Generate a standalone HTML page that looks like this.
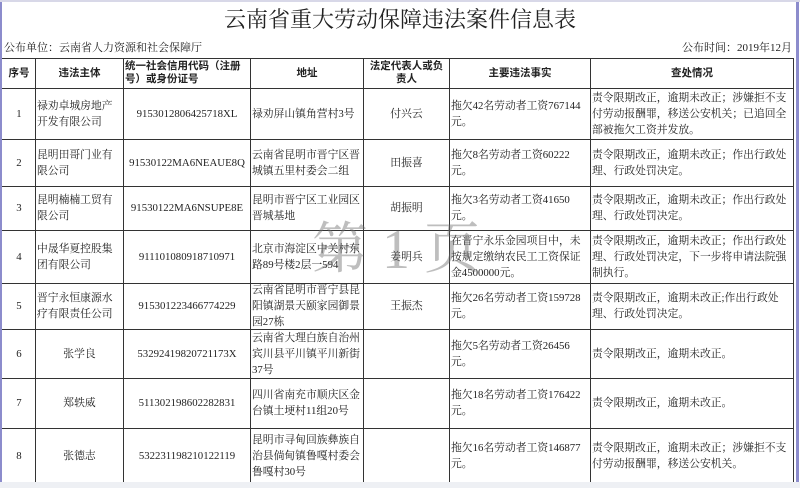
<!DOCTYPE html>
<html><head><meta charset="utf-8"><style>
body{margin:0;width:800px;height:488px;overflow:hidden;background:#fff;font-family:"Liberation Serif","Noto Serif CJK SC",serif;font-size:10.8px;color:#222;position:relative}
.v,.h{position:absolute;background:#333}
.v{width:1px}.h{height:1px}
.c{position:absolute;display:flex;align-items:center;line-height:16px;box-sizing:border-box;padding:0 1px 0 2px}
.ctr{justify-content:center;text-align:center}
.hd{font-family:"Liberation Sans","Noto Sans CJK SC",sans-serif;font-weight:bold;font-size:10.5px;line-height:13px}
</style></head><body>
<div style="position:absolute;left:0;top:0;width:2px;height:488px;background:#8c8ccc"></div>
<div style="position:absolute;left:796px;top:0;width:3px;height:488px;background:#8c8ccc"></div>
<div style="position:absolute;left:0;top:0;width:800px;height:2px;background:#d8d8e8"></div>
<div style="position:absolute;left:0;top:482px;width:800px;height:6px;background:#eef0f4"></div>
<div style="position:absolute;left:0;top:4px;width:800px;text-align:center;font-size:22px;line-height:32px;color:#222">云南省重大劳动保障违法案件信息表</div>
<div style="position:absolute;left:4px;top:40px;font-size:11px;line-height:16px">公布单位：云南省人力资源和社会保障厅</div>
<div style="position:absolute;right:8px;top:40px;font-size:11px;line-height:16px">公布时间：2019年12月</div>
<div class="h" style="left:2px;top:58px;width:792px"></div>
<div class="h" style="left:2px;top:88px;width:792px"></div>
<div class="h" style="left:2px;top:139px;width:792px"></div>
<div class="h" style="left:2px;top:186px;width:792px"></div>
<div class="h" style="left:2px;top:230px;width:792px"></div>
<div class="h" style="left:2px;top:283px;width:792px"></div>
<div class="h" style="left:2px;top:329px;width:792px"></div>
<div class="h" style="left:2px;top:378px;width:792px"></div>
<div class="h" style="left:2px;top:428px;width:792px"></div>
<div class="v" style="left:35px;top:58px;height:424px"></div>
<div class="v" style="left:123px;top:58px;height:424px"></div>
<div class="v" style="left:250px;top:58px;height:424px"></div>
<div class="v" style="left:363px;top:58px;height:424px"></div>
<div class="v" style="left:449px;top:58px;height:424px"></div>
<div class="v" style="left:590px;top:58px;height:424px"></div>
<div class="v" style="left:793px;top:58px;height:424px"></div>

<div class="c ctr hd" style="left:2px;top:58px;width:33px;height:30px">序号</div>
<div class="c ctr hd" style="left:35px;top:58px;width:88px;height:30px">违法主体</div>
<div class="c hd" style="left:123px;top:58px;width:127px;height:30px">统一社会信用代码（注册号）或身份证号</div>
<div class="c ctr hd" style="left:250px;top:58px;width:113px;height:30px">地址</div>
<div class="c ctr hd" style="left:363px;top:58px;width:86px;height:30px">法定代表人或负责人</div>
<div class="c ctr hd" style="left:449px;top:58px;width:141px;height:30px">主要违法事实</div>
<div class="c ctr hd" style="left:590px;top:58px;width:203px;height:30px">查处情况</div>

<div class="c ctr" style="left:2px;top:88px;width:33px;height:51px">1</div>
<div class="c" style="left:35px;top:88px;width:88px;height:51px">禄劝卓城房地产开发有限公司</div>
<div class="c ctr" style="left:123px;top:88px;width:127px;height:51px">91530128064257​18XL</div>
<div class="c" style="left:250px;top:88px;width:113px;height:51px">禄劝屏山镇角营村3号</div>
<div class="c ctr" style="left:363px;top:88px;width:86px;height:51px">付兴云</div>
<div class="c" style="left:449px;top:88px;width:141px;height:51px">拖欠42名劳动者工资767144元。</div>
<div class="c" style="left:590px;top:88px;width:203px;height:51px">责令限期改正，逾期未改正；涉嫌拒不支付劳动报酬罪，移送公安机关；已追回全部被拖欠工资并发放。</div>

<div class="c ctr" style="left:2px;top:139px;width:33px;height:47px">2</div>
<div class="c" style="left:35px;top:139px;width:88px;height:47px">昆明田哥门业有限公司</div>
<div class="c ctr" style="left:123px;top:139px;width:127px;height:47px">91530122MA6NEAUE8Q</div>
<div class="c" style="left:250px;top:139px;width:113px;height:47px">云南省昆明市晋宁区晋城镇五里村委会二组</div>
<div class="c ctr" style="left:363px;top:139px;width:86px;height:47px">田振喜</div>
<div class="c" style="left:449px;top:139px;width:141px;height:47px">拖欠8名劳动者工资60222元。</div>
<div class="c" style="left:590px;top:139px;width:203px;height:47px">责令限期改正，逾期未改正；作出行政处理、行政处罚决定。</div>

<div class="c ctr" style="left:2px;top:186px;width:33px;height:44px">3</div>
<div class="c" style="left:35px;top:186px;width:88px;height:44px">昆明楠楠工贸有限公司</div>
<div class="c ctr" style="left:123px;top:186px;width:127px;height:44px">91530122MA6NSUPE8E</div>
<div class="c" style="left:250px;top:186px;width:113px;height:44px">昆明市晋宁区工业园区晋城基地</div>
<div class="c ctr" style="left:363px;top:186px;width:86px;height:44px">胡振明</div>
<div class="c" style="left:449px;top:186px;width:141px;height:44px">拖欠3名劳动者工资41650元。</div>
<div class="c" style="left:590px;top:186px;width:203px;height:44px">责令限期改正，逾期未改正；作出行政处理、行政处罚决定。</div>

<div class="c ctr" style="left:2px;top:230px;width:33px;height:53px">4</div>
<div class="c" style="left:35px;top:230px;width:88px;height:53px">中晟华夏控股集团有限公司</div>
<div class="c ctr" style="left:123px;top:230px;width:127px;height:53px">911101080918710971</div>
<div class="c" style="left:250px;top:230px;width:113px;height:53px">北京市海淀区中关村东路89号楼2层一594</div>
<div class="c ctr" style="left:363px;top:230px;width:86px;height:53px">姜明兵</div>
<div class="c" style="left:449px;top:230px;width:141px;height:53px">在晋宁永乐金园项目中，未按规定缴纳农民工工资保证金4500000元。</div>
<div class="c" style="left:590px;top:230px;width:203px;height:53px">责令限期改正，逾期未改正；作出行政处理、行政处罚决定，下一步将申请法院强制执行。</div>

<div class="c ctr" style="left:2px;top:283px;width:33px;height:46px">5</div>
<div class="c" style="left:35px;top:283px;width:88px;height:46px">晋宁永恒康源水疗有限责任公司</div>
<div class="c ctr" style="left:123px;top:283px;width:127px;height:46px">915301223466774229</div>
<div class="c" style="left:250px;top:283px;width:113px;height:46px">云南省昆明市晋宁县昆阳镇湖景天颐家园御景园27栋</div>
<div class="c ctr" style="left:363px;top:283px;width:86px;height:46px">王振杰</div>
<div class="c" style="left:449px;top:283px;width:141px;height:46px">拖欠26名劳动者工资159728元。</div>
<div class="c" style="left:590px;top:283px;width:203px;height:46px">责令限期改正，逾期未改正;作出行政处理、行政处罚决定。</div>

<div class="c ctr" style="left:2px;top:329px;width:33px;height:49px">6</div>
<div class="c ctr" style="left:35px;top:329px;width:88px;height:49px">张学良</div>
<div class="c ctr" style="left:123px;top:329px;width:127px;height:49px">53292419820721173X</div>
<div class="c" style="left:250px;top:329px;width:113px;height:49px">云南省大理白族自治州宾川县平川镇平川新街37号</div>
<div class="c" style="left:449px;top:329px;width:141px;height:49px">拖欠5名劳动者工资26456元。</div>
<div class="c" style="left:590px;top:329px;width:203px;height:49px">责令限期改正，逾期未改正。</div>

<div class="c ctr" style="left:2px;top:378px;width:33px;height:50px">7</div>
<div class="c ctr" style="left:35px;top:378px;width:88px;height:50px">郑轶威</div>
<div class="c ctr" style="left:123px;top:378px;width:127px;height:50px">511302198602282831</div>
<div class="c" style="left:250px;top:378px;width:113px;height:50px">四川省南充市顺庆区金台镇土埂村11组20号</div>
<div class="c" style="left:449px;top:378px;width:141px;height:50px">拖欠18名劳动者工资176422元。</div>
<div class="c" style="left:590px;top:378px;width:203px;height:50px">责令限期改正，逾期未改正。</div>

<div class="c ctr" style="left:2px;top:428px;width:33px;height:56px">8</div>
<div class="c ctr" style="left:35px;top:428px;width:88px;height:56px">张德志</div>
<div class="c ctr" style="left:123px;top:428px;width:127px;height:56px">532231198210122119</div>
<div class="c" style="left:250px;top:428px;width:113px;height:56px">昆明市寻甸回族彝族自治县倘甸镇鲁嘎村委会鲁嘎村30号</div>
<div class="c" style="left:449px;top:428px;width:141px;height:56px">拖欠16名劳动者工资146877元。</div>
<div class="c" style="left:590px;top:428px;width:203px;height:56px">责令限期改正，逾期未改正；涉嫌拒不支付劳动报酬罪，移送公安机关。</div>

<div style="position:absolute;left:312px;top:218px;font-size:56px;line-height:64px;color:rgba(110,110,110,0.45);white-space:pre">第 1 页</div>
</body></html>
